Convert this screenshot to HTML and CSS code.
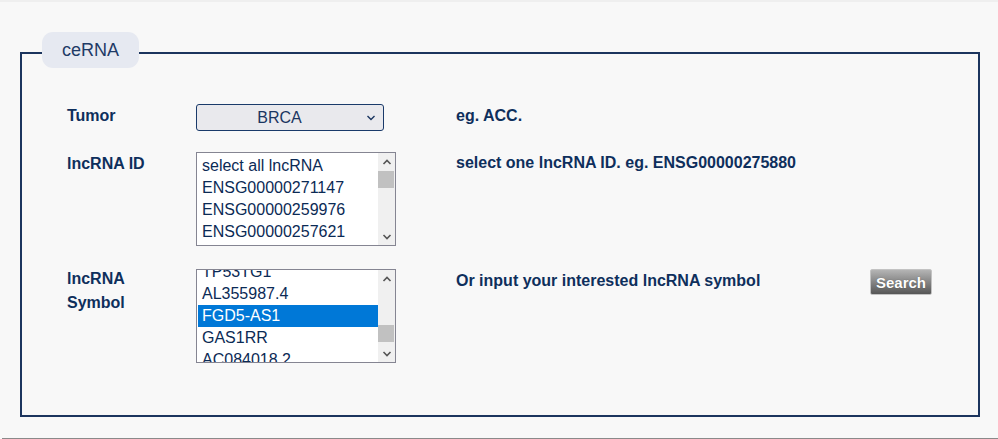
FILE: index.html
```html
<!DOCTYPE html>
<html lang="en">
<head>
<meta charset="utf-8">
<title>ceRNA</title>
<link rel="stylesheet" href="styles.css">
</head>
<body>
<div class="page">
  <fieldset class="panel">
    <legend class="legend"><span class="legend-tab">ceRNA</span></legend>
    <div class="form">
      <div class="row row-tumor">
        <div class="label">Tumor</div>
        <div class="control">
          <div class="dropdown">
            <span class="dropdown-value">BRCA</span>
            <span class="dropdown-arrow">
              <svg width="10" height="6" viewBox="0 0 10 6"><polyline points="1.5,1 5,4.5 8.5,1" fill="none" stroke="#1a3560" stroke-width="1.4"/></svg>
            </span>
          </div>
        </div>
        <div class="desc">eg. ACC.</div>
      </div>

      <div class="row row-id">
        <div class="label">lncRNA ID</div>
        <div class="control">
          <div class="listbox">
            <div class="options">
              <div class="opt">select all lncRNA</div>
              <div class="opt">ENSG00000271147</div>
              <div class="opt">ENSG00000259976</div>
              <div class="opt">ENSG00000257621</div>
            </div>
            <div class="scrollbar">
              <div class="sb-btn"><svg width="10" height="6" viewBox="0 0 10 6"><polyline points="1.5,5 5,1.5 8.5,5" fill="none" stroke="#555" stroke-width="1.6"/></svg></div>
              <div class="sb-track"><div class="sb-thumb"></div></div>
              <div class="sb-btn"><svg width="10" height="6" viewBox="0 0 10 6"><polyline points="1.5,1 5,4.5 8.5,1" fill="none" stroke="#555" stroke-width="1.6"/></svg></div>
            </div>
          </div>
        </div>
        <div class="desc desc-id">select one lncRNA ID. eg. ENSG00000275880</div>
      </div>

      <div class="row row-symbol">
        <div class="label">lncRNA<br>Symbol</div>
        <div class="control">
          <div class="listbox">
            <div class="options scrolled">
              <div class="opt">TP53TG1</div>
              <div class="opt">AL355987.4</div>
              <div class="opt selected">FGD5-AS1</div>
              <div class="opt">GAS1RR</div>
              <div class="opt">AC084018.2</div>
            </div>
            <div class="scrollbar">
              <div class="sb-btn"><svg width="10" height="6" viewBox="0 0 10 6"><polyline points="1.5,5 5,1.5 8.5,5" fill="none" stroke="#555" stroke-width="1.6"/></svg></div>
              <div class="sb-track track-bottom"><div class="sb-thumb"></div></div>
              <div class="sb-btn"><svg width="10" height="6" viewBox="0 0 10 6"><polyline points="1.5,1 5,4.5 8.5,1" fill="none" stroke="#555" stroke-width="1.6"/></svg></div>
            </div>
          </div>
        </div>
        <div class="desc">Or input your interested lncRNA symbol</div>
        <div class="action"><button class="search-btn" type="button">Search</button></div>
      </div>
    </div>
  </fieldset>
</div>
</body>
</html>
```

FILE: styles.css
```css
html, body {
  margin: 0;
  padding: 0;
}
body {
  background: #f8f8f8;
  border-top: 2px solid #efefef;
  font-family: "Liberation Sans", Arial, sans-serif;
  color: #0e2f5c;
}
.page {
  margin-left: 2px;
  padding: 30px 18px 0 18px;
  border-bottom: 1px solid #8a8a8a;
  height: 437px;
  box-sizing: border-box;
}
.panel {
  margin: 0;
  width: 960px;
  height: 385px;
  box-sizing: border-box;
  border: 2px solid #1c355e;
  padding: 0;
  min-width: 0;
}
.legend {
  margin-left: 20px;
  padding: 0 0 6px 0;
  height: 42px;
  box-sizing: border-box;
}
.legend-tab {
  display: block;
  padding: 0 20px;
  height: 36px;
  line-height: 36px;
  background: #e6e9f1;
  border-radius: 11px;
  font-size: 18px;
  color: #1e3a66;
}
.form {
  display: flex;
  flex-direction: column;
  padding: 30px 0 0 45px;
}
.row {
  display: grid;
  grid-template-columns: 129px 260px 414px 62px;
  align-items: start;
}
.row-tumor { margin-bottom: 21px; }
.row-id { margin-bottom: 23px; }
.label, .desc {
  font-size: 16px;
  font-weight: bold;
  line-height: 24px;
  color: #0e2f5c;
}
.desc-id { margin-top: -1px; }
.row-symbol .label { margin-top: -2px; }
.dropdown {
  width: 188px;
  height: 27px;
  box-sizing: border-box;
  border: 1px solid #1a3a6a;
  border-radius: 3px;
  background: #e9e9ed;
  display: flex;
  align-items: center;
}
.dropdown-value {
  flex: 1;
  text-align: center;
  font-size: 16px;
  color: #1a3560;
  padding-left: 2px;
}
.dropdown-arrow {
  width: 22px;
  display: flex;
  justify-content: center;
  padding-right: 1px;
}
.listbox {
  width: 200px;
  height: 94px;
  box-sizing: border-box;
  border: 1px solid #858592;
  background: #ffffff;
  display: flex;
  overflow: hidden;
}
.options {
  flex: 1;
  padding: 2px 0 2px 1px;
  overflow: hidden;
}
.options.scrolled {
  margin-top: -11px;
}
.opt {
  height: 22px;
  line-height: 22px;
  font-size: 16px;
  padding-left: 4px;
  color: #0b2a55;
  white-space: nowrap;
}
.opt.selected {
  background: #0078d7;
  color: #ffffff;
}
.scrollbar {
  width: 17px;
  background: #f0f0f0;
  display: flex;
  flex-direction: column;
}
.sb-btn {
  height: 17px;
  display: flex;
  align-items: center;
  justify-content: center;
}
.sb-track {
  flex: 1;
  display: flex;
  flex-direction: column;
  padding: 1px 1px 0 0;
}
.sb-thumb {
  height: 17px;
  background: #c1c1c1;
}
.track-bottom {
  justify-content: flex-end;
  padding-bottom: 3px;
}
.search-btn {
  width: 62px;
  height: 26px;
  box-sizing: border-box;
  border: 1px solid #c3c3c3;
  border-radius: 2px;
  background: linear-gradient(to bottom, #b4b4b4 0%, #8a8a8a 45%, #565656 100%);
  color: #ffffff;
  font-family: "Liberation Sans", Arial, sans-serif;
  font-weight: bold;
  font-size: 15px;
  padding: 0;
  text-shadow: 0 0 1px rgba(0,0,0,0.4);
  cursor: pointer;
}
```
